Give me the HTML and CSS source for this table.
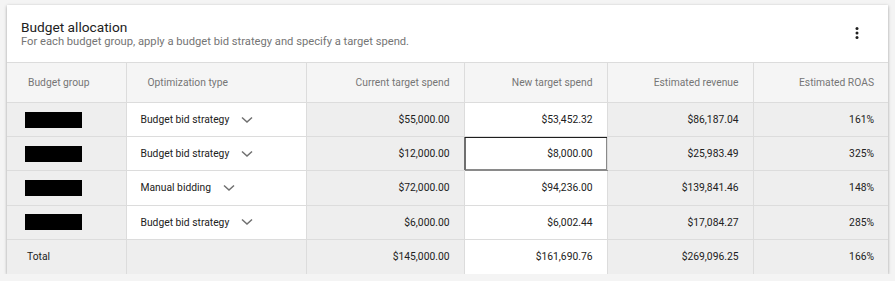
FILE: index.html
```html
<!DOCTYPE html>
<html>
<head>
<meta charset="utf-8">
<link rel="stylesheet" href="styles.css">
</head>
<body>
<div class="card">
  <div class="card-header">
    <div class="titles">
      <div class="title">Budget allocation</div>
      <div class="subtitle">For each budget group, apply a budget bid strategy and specify a target spend.</div>
    </div>
    <button class="menu" aria-label="More">
      <svg width="18" height="18" viewBox="0 0 24 24"><circle cx="12" cy="6" r="2"/><circle cx="12" cy="12" r="2"/><circle cx="12" cy="18" r="2"/></svg>
    </button>
  </div>
  <table class="grid">
    <colgroup>
      <col class="c1"><col class="c2"><col class="c3"><col class="c4"><col class="c5"><col class="c6">
    </colgroup>
    <thead>
      <tr>
        <th class="left">Budget group</th>
        <th class="left">Optimization type</th>
        <th>Current target spend</th>
        <th>New target spend</th>
        <th>Estimated revenue</th>
        <th>Estimated ROAS</th>
      </tr>
    </thead>
    <tbody>
      <tr>
        <td class="left ro"><span class="redact"></span></td>
        <td class="left edit opt"><span class="select">Budget bid strategy<svg class="chev" width="12" height="8" viewBox="0 0 12 8"><polyline points="1,1.5 6,6 11,1.5"/></svg></span></td>
        <td class="ro">$55,000.00</td>
        <td class="edit">$53,452.32</td>
        <td class="ro">$86,187.04</td>
        <td class="ro">161%</td>
      </tr>
      <tr>
        <td class="left ro"><span class="redact"></span></td>
        <td class="left edit opt"><span class="select">Budget bid strategy<svg class="chev" width="12" height="8" viewBox="0 0 12 8"><polyline points="1,1.5 6,6 11,1.5"/></svg></span></td>
        <td class="ro">$12,000.00</td>
        <td class="edit focused">$8,000.00</td>
        <td class="ro">$25,983.49</td>
        <td class="ro">325%</td>
      </tr>
      <tr>
        <td class="left ro"><span class="redact"></span></td>
        <td class="left edit opt"><span class="select">Manual bidding<svg class="chev" width="12" height="8" viewBox="0 0 12 8"><polyline points="1,1.5 6,6 11,1.5"/></svg></span></td>
        <td class="ro">$72,000.00</td>
        <td class="edit">$94,236.00</td>
        <td class="ro">$139,841.46</td>
        <td class="ro">148%</td>
      </tr>
      <tr>
        <td class="left ro"><span class="redact"></span></td>
        <td class="left edit opt"><span class="select">Budget bid strategy<svg class="chev" width="12" height="8" viewBox="0 0 12 8"><polyline points="1,1.5 6,6 11,1.5"/></svg></span></td>
        <td class="ro">$6,000.00</td>
        <td class="edit">$6,002.44</td>
        <td class="ro">$17,084.27</td>
        <td class="ro">285%</td>
      </tr>
      <tr class="total">
        <td class="left ro">Total</td>
        <td class="left ro"></td>
        <td class="ro">$145,000.00</td>
        <td class="edit">$161,690.76</td>
        <td class="ro">$269,096.25</td>
        <td class="ro">166%</td>
      </tr>
    </tbody>
  </table>
</div>
</body>
</html>
```

FILE: styles.css
```css
html, body {
  margin: 0;
  padding: 0;
}
body {
  background: #f4f4f4;
  font-family: Roboto, "Liberation Sans", Arial, sans-serif;
  padding: 5px 7px 0 7px;
}
.card {
  width: 881px;
  background: #fff;
  box-shadow: 0 1px 3px rgba(0, 0, 0, 0.35);
}
.card-header {
  display: flex;
  justify-content: space-between;
  align-items: flex-start;
  padding: 14px 22px 13px 14px;
  border-bottom: 1px solid #dcdcdc;
}
.title {
  font-size: 13.7px;
  line-height: 16px;
  color: #212121;
}
.subtitle {
  font-size: 11.2px;
  line-height: 14px;
  color: #757575;
}
.menu {
  border: 0;
  background: none;
  padding: 0;
  margin-top: 5px;
  width: 18px;
  height: 18px;
  display: block;
}
.menu svg {
  display: block;
  fill: #202020;
}
.grid {
  width: 881px;
  border-collapse: collapse;
  table-layout: fixed;
  font-size: 10.3px;
}
.c1 { width: 119px; }
.c2 { width: 180px; }
.c3 { width: 158px; }
.c4 { width: 143px; }
.c5 { width: 146px; }
.c6 { width: 135px; }
.grid th {
  height: 39px;
  background: #f5f5f5;
  color: #757575;
  font-weight: 400;
  text-align: right;
  padding: 0 14px 0 20px;
  border-left: 1px solid #dcdcdc;
  border-bottom: 1px solid #dcdcdc;
  white-space: nowrap;
}
.grid td {
  height: 34.2px;
  box-sizing: border-box;
  padding: 0 14px 0 20px;
  color: #212121;
  text-align: right;
  border-left: 1px solid #dcdcdc;
  border-bottom: 1px solid #dcdcdc;
  white-space: nowrap;
}
.grid th:first-child,
.grid td:first-child {
  border-left: 0;
}
.grid .left {
  text-align: left;
}
.grid th.left {
  padding-left: 21px;
}
.grid td.opt {
  padding-left: 14px;
}
.grid td.ro {
  background: #eeeeee;
}
.grid td.edit {
  background: #fff;
}
.grid tr.total td {
  border-bottom: 0;
  height: 34.5px;
}
.grid td.focused {
  box-shadow: inset 0 1px 0 #1f1f1f, inset 1px 0 0 #6f6f6f, inset 0 -1px 0 #8a8a8a, inset -1px 0 0 #8a8a8a;
  border-left: 1px solid #6f6f6f;
  border-bottom: 1px solid #8a8a8a;
}
.redact {
  display: block;
  width: 57px;
  height: 16px;
  margin-left: -2px;
  background: #000;
}
.select {
  display: inline-flex;
  align-items: center;
}
.chev {
  margin-left: 12px;
  fill: none;
  stroke: #6f6f6f;
  stroke-width: 1.5;
}
```
